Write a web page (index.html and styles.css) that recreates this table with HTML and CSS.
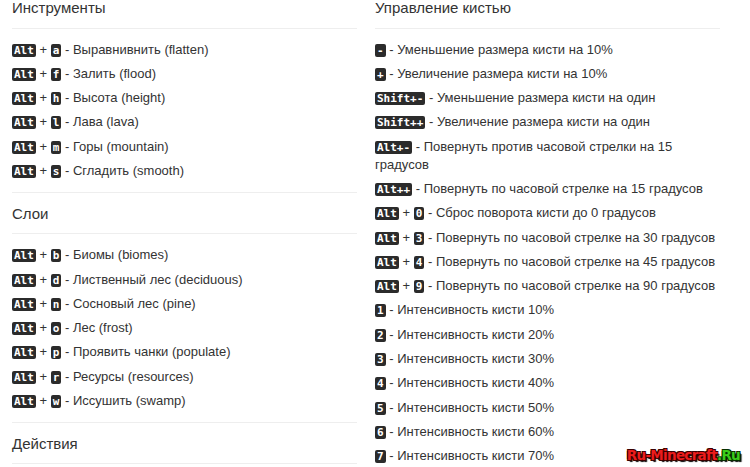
FILE: index.html
```html
<!DOCTYPE html>
<html lang="ru">
<head>
<meta charset="utf-8">
<title>Горячие клавиши</title>
<link rel="stylesheet" href="styles.css">
</head>
<body>
<div class="cols">
  <div class="col">
    <h4 class="first">Инструменты</h4>
    <hr>
    <ul class="keys">
      <li><kbd>Alt</kbd> + <kbd>a</kbd> - Выравнивнить (flatten)</li>
      <li><kbd>Alt</kbd> + <kbd>f</kbd> - Залить (flood)</li>
      <li><kbd>Alt</kbd> + <kbd>h</kbd> - Высота (height)</li>
      <li><kbd>Alt</kbd> + <kbd>l</kbd> - Лава (lava)</li>
      <li><kbd>Alt</kbd> + <kbd>m</kbd> - Горы (mountain)</li>
      <li><kbd>Alt</kbd> + <kbd>s</kbd> - Сгладить (smooth)</li>
    </ul>
    <hr>
    <h4>Слои</h4>
    <hr>
    <ul class="keys">
      <li><kbd>Alt</kbd> + <kbd>b</kbd> - Биомы (biomes)</li>
      <li><kbd>Alt</kbd> + <kbd>d</kbd> - Лиственный лес (deciduous)</li>
      <li><kbd>Alt</kbd> + <kbd>n</kbd> - Сосновый лес (pine)</li>
      <li><kbd>Alt</kbd> + <kbd>o</kbd> - Лес (frost)</li>
      <li><kbd>Alt</kbd> + <kbd>p</kbd> - Проявить чанки (populate)</li>
      <li><kbd>Alt</kbd> + <kbd>r</kbd> - Ресурсы (resources)</li>
      <li><kbd>Alt</kbd> + <kbd>w</kbd> - Иссушить (swamp)</li>
    </ul>
    <hr>
    <h4>Действия</h4>
    <hr>
  </div>
  <div class="col">
    <h4 class="first">Управление кистью</h4>
    <hr>
    <ul class="keys">
      <li><kbd>-</kbd> - Уменьшение размера кисти на 10%</li>
      <li><kbd>+</kbd> - Увеличение размера кисти на 10%</li>
      <li><kbd>Shift+-</kbd> - Уменьшение размера кисти на один</li>
      <li><kbd>Shift++</kbd> - Увеличение размера кисти на один</li>
      <li><kbd>Alt+-</kbd> - Повернуть против часовой стрелки на 15 градусов</li>
      <li><kbd>Alt++</kbd> - Повернуть по часовой стрелке на 15 градусов</li>
      <li><kbd>Alt</kbd> + <kbd>0</kbd> - Сброс поворота кисти до 0 градусов</li>
      <li><kbd>Alt</kbd> + <kbd>3</kbd> - Повернуть по часовой стрелке на 30 градусов</li>
      <li><kbd>Alt</kbd> + <kbd>4</kbd> - Повернуть по часовой стрелке на 45 градусов</li>
      <li><kbd>Alt</kbd> + <kbd>9</kbd> - Повернуть по часовой стрелке на 90 градусов</li>
      <li><kbd>1</kbd> - Интенсивность кисти 10%</li>
      <li><kbd>2</kbd> - Интенсивность кисти 20%</li>
      <li><kbd>3</kbd> - Интенсивность кисти 30%</li>
      <li><kbd>4</kbd> - Интенсивность кисти 40%</li>
      <li><kbd>5</kbd> - Интенсивность кисти 50%</li>
      <li><kbd>6</kbd> - Интенсивность кисти 60%</li>
      <li><kbd>7</kbd> - Интенсивность кисти 70%</li>
    </ul>
  </div>
</div>
<div class="watermark">Ru-Minecraft<span class="dom">.Ru</span></div>
</body>
</html>
```
FILE: styles.css
```css
html, body {
  margin: 0;
  height: 100%;
  overflow: hidden;
}
body {
  padding: 0 12px;
  background: #fff;
  color: #333;
  font-family: "Liberation Sans", Arial, sans-serif;
  font-size: 13px;
}
.cols {
  display: grid;
  grid-template-columns: 345px 345px;
  column-gap: 18px;
}
h4 {
  margin: 13px 0 11px;
  font-size: 15px;
  font-weight: 400;
  line-height: 16.5px;
  color: #333;
}
h4.first {
  margin-top: 0;
}
hr {
  margin: 0;
  border: 0;
  border-top: 1px solid #eee;
}
.keys {
  margin: 9px 0 8.5px;
  padding: 0;
  list-style: none;
}
.keys li {
  padding: 3.15px 0;
  line-height: 18px;
}
kbd {
  display: inline-block;
  padding: 0 2px;
  height: 13px;
  line-height: 13px;
  vertical-align: 0;
  background: #2b2b2b;
  color: #fff;
  border-radius: 2px;
  font-family: "DejaVu Sans Mono", "Liberation Mono", monospace;
  font-size: 11px;
  font-weight: 700;
}
.watermark {
  position: absolute;
  right: 10px;
  bottom: 4px;
  font-family: "DejaVu Sans", sans-serif;
  font-weight: 700;
  font-size: 13.5px;
  letter-spacing: -0.7px;
  color: #ec1c1c;
  text-shadow: 1px 1px 0 #3a0000, -1px -1px 0 #3a0000, 1px -1px 0 #3a0000, -1px 1px 0 #3a0000, 2px 2px 1px #000;
}
.watermark .dom {
  color: #3bcc1a;
  text-shadow: 1px 1px 0 #062e00, -1px -1px 0 #062e00, 1px -1px 0 #062e00, -1px 1px 0 #062e00, 2px 2px 1px #000;
}
```
